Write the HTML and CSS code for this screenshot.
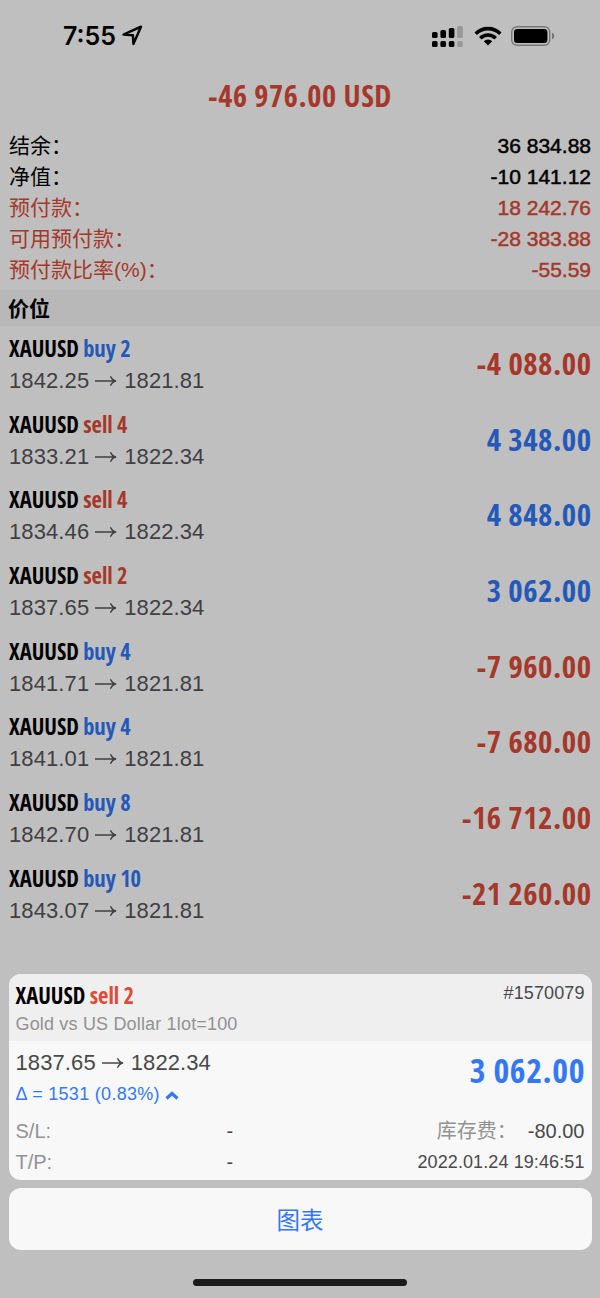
FILE: index.html
```
<!DOCTYPE html>
<html lang="zh-CN">
<head>
    <meta charset="UTF-8">
    <meta name="viewport" content="width=device-width, initial-scale=1.0">
    <title>交易</title>
    <link rel="stylesheet" href="styles.css">
</head>
<body>

<!-- shared arrow -->
<svg class="defs" width="0" height="0">
    <symbol id="arrow" viewBox="0 0 22 14">
        <path d="M0 7h21M15.500 2.200c1 2.600 2.800 4.200 5.500 4.800c-2.700.6-4.500 2.200-5.500 4.800" fill="none" stroke="currentColor" stroke-width="1.4"/>
    </symbol>
</svg>

<div class="screen">
    <div class="status-bar">
        <div class="clock">
            <span>7:55</span>
            <svg width="21" height="21" viewBox="0 0 21 21">
                <path d="M1.500 9.600L19 1.700L11.400 19L10.900 10.200Z" fill="none" stroke="#000" stroke-width="2.400" stroke-linejoin="round"/>
            </svg>
        </div>
        <div class="status-icons">
            <svg width="32" height="22" viewBox="0 0 32 22">
                <rect x="0" y="7" width="5.600" height="6" rx="1.600"/>
                <rect x="8.400" y="5" width="5.600" height="8" rx="1.600"/>
                <rect x="16.800" y="3" width="5.600" height="10" rx="1.600"/>
                <rect x="25.200" y="1" width="5.600" height="12" rx="1.600" fill="#999"/>
                <rect x="0" y="16" width="5.600" height="6" rx="1.600"/>
                <rect x="8.400" y="16" width="5.600" height="6" rx="1.600"/>
                <rect x="16.800" y="16" width="5.600" height="6" rx="1.600"/>
                <rect x="25.200" y="16" width="5.600" height="6" rx="1.600" fill="#999"/>
            </svg>
            <svg width="28" height="20" viewBox="0 0 28 20">
                <path d="M1.700 7.700a17.400 17.400 0 0 1 24.600 0M6.300 12.200a10.900 10.900 0 0 1 15.400 0" fill="none" stroke="#000" stroke-width="3.600"/>
                <path d="M14 19.500l-4.200-4.200a6 6 0 0 1 8.400 0z"/>
            </svg>
            <svg width="44" height="20" viewBox="0 0 44 20">
                <rect x=".7" y=".7" width="38" height="18.600" rx="5.400" fill="none" stroke="#777" stroke-width="1.400"/>
                <rect x="3" y="3" width="33.400" height="14" rx="3.300"/>
                <path d="M41 6.800c3.200 1 3.200 5.400 0 6.400z" fill="#777"/>
            </svg>
        </div>
    </div>

    <h1 class="profit">-46 976.00 USD</h1>

    <div class="summary">
        <div class="summary-row"><span>结余：</span><b>36 834.88</b></div>
        <div class="summary-row"><span>净值：</span><b>-10 141.12</b></div>
        <div class="summary-row red"><span>预付款：</span><b>18 242.76</b></div>
        <div class="summary-row red"><span>可用预付款：</span><b>-28 383.88</b></div>
        <div class="summary-row red"><span>预付款比率(%)：</span><b>-55.59</b></div>
    </div>

    <h2 class="section-title">价位</h2>

    <div class="positions">
        <div class="position">
            <div>
                <div class="symbol">XAUUSD <span class="blue">buy 2</span></div>
                <div class="prices">1842.25<svg class="arrow"><use href="#arrow"/></svg>1821.81</div>
            </div>
            <div class="amount red">-4 088.00</div>
        </div>
        <div class="position">
            <div>
                <div class="symbol">XAUUSD <span class="red">sell 4</span></div>
                <div class="prices">1833.21<svg class="arrow"><use href="#arrow"/></svg>1822.34</div>
            </div>
            <div class="amount blue">4 348.00</div>
        </div>
        <div class="position">
            <div>
                <div class="symbol">XAUUSD <span class="red">sell 4</span></div>
                <div class="prices">1834.46<svg class="arrow"><use href="#arrow"/></svg>1822.34</div>
            </div>
            <div class="amount blue">4 848.00</div>
        </div>
        <div class="position">
            <div>
                <div class="symbol">XAUUSD <span class="red">sell 2</span></div>
                <div class="prices">1837.65<svg class="arrow"><use href="#arrow"/></svg>1822.34</div>
            </div>
            <div class="amount blue">3 062.00</div>
        </div>
        <div class="position">
            <div>
                <div class="symbol">XAUUSD <span class="blue">buy 4</span></div>
                <div class="prices">1841.71<svg class="arrow"><use href="#arrow"/></svg>1821.81</div>
            </div>
            <div class="amount red">-7 960.00</div>
        </div>
        <div class="position">
            <div>
                <div class="symbol">XAUUSD <span class="blue">buy 4</span></div>
                <div class="prices">1841.01<svg class="arrow"><use href="#arrow"/></svg>1821.81</div>
            </div>
            <div class="amount red">-7 680.00</div>
        </div>
        <div class="position">
            <div>
                <div class="symbol">XAUUSD <span class="blue">buy 8</span></div>
                <div class="prices">1842.70<svg class="arrow"><use href="#arrow"/></svg>1821.81</div>
            </div>
            <div class="amount red">-16 712.00</div>
        </div>
        <div class="position">
            <div>
                <div class="symbol">XAUUSD <span class="blue">buy 10</span></div>
                <div class="prices">1843.07<svg class="arrow"><use href="#arrow"/></svg>1821.81</div>
            </div>
            <div class="amount red">-21 260.00</div>
        </div>
    </div>

    <!-- bottom sheet -->
    <div class="sheet">
        <div class="card">
            <div class="card-head">
                <div>
                    <div class="symbol">XAUUSD <span class="red">sell 2</span></div>
                    <div class="description">Gold vs US Dollar 1lot=100</div>
                </div>
                <div class="ticket">#1570079</div>
            </div>
            <div class="card-main">
                <div>
                    <div class="prices">1837.65<svg class="arrow"><use href="#arrow"/></svg>1822.34</div>
                    <div class="delta">Δ = 1531 (0.83%)<svg width="14" height="10" viewBox="0 0 14 10"><path d="M1.500 8.500L7 3.500L12.500 8.500" fill="none" stroke="currentColor" stroke-width="3.200"/></svg></div>
                </div>
                <div class="amount blue">3 062.00</div>
            </div>
            <div class="details">
                <span class="label">S/L:</span><span>-</span>
                <span class="fee"><span class="label">库存费：</span>-80.00</span>
                <span class="label">T/P:</span><span>-</span>
                <span class="date">2022.01.24 19:46:51</span>
            </div>
        </div>
        <button class="chart-button">图表</button>
    </div>

    <div class="home-indicator"></div>
</div>

</body>
</html>
```
FILE: styles.css
```
* {
    box-sizing: border-box;
}

body {
    margin: 0;
    background-color: #bfbfbf;
    color: #000;
    font-family: "Liberation Sans", "Noto Sans CJK SC", sans-serif;
}

.defs {
    display: block;
}

.screen {
    display: flex;
    flex-direction: column;
    width: 600px;
    height: 1298px;
    overflow: hidden;
}

.red {
    color: #a5382a;
}

.blue {
    color: #2559b9;
}

/* status bar */
.status-bar {
    display: flex;
    justify-content: space-between;
    align-items: center;
    height: 71px;
    padding: 0 45px 0 63px;
}

.clock {
    display: flex;
    align-items: center;
    gap: 6px;
    font-family: Inter, sans-serif;
    font-size: 25px;
    font-weight: 600;
}

.status-icons {
    display: flex;
    align-items: center;
    gap: 9.5px;
}

.profit {
    margin: 0;
    height: 59px;
    line-height: 49px;
    text-align: center;
    font-family: "Open Sans Condensed", "Open Sans", sans-serif;
    font-size: 30.5px;
    font-weight: 600;
    letter-spacing: 0.6px;
    word-spacing: -1.5px;
    color: #a5382a;
}

/* account summary */
.summary {
    height: 160px;
    padding: 0 9px;
}

.summary-row {
    display: flex;
    justify-content: space-between;
    height: 31px;
    line-height: 31px;
    font-size: 21px;
}

.summary-row b {
    font-weight: 400;
    -webkit-text-stroke: 0.5px currentColor;
}

.section-title {
    margin: 0;
    height: 36px;
    padding-left: 8px;
    line-height: 37px;
    font-size: 21px;
    background-color: #b8b8b8;
}

/* open positions */
.position {
    display: flex;
    justify-content: space-between;
    align-items: center;
    height: 75.7px;
    padding: 2px 9px 0;
}

.symbol {
    line-height: 32px;
    font-family: "Open Sans Condensed", "Open Sans", sans-serif;
    font-size: 22.5px;
    font-weight: 600;
    word-spacing: -1.2px;
}

.prices {
    display: flex;
    align-items: center;
    line-height: 32px;
    font-size: 22px;
    letter-spacing: 0.1px;
    color: #404043;
}

.arrow {
    width: 22px;
    height: 14px;
    margin: 0 7px 0 6px;
}

.amount {
    padding-bottom: 4px;
    font-family: "Open Sans Condensed", "Open Sans", sans-serif;
    font-size: 31px;
    font-weight: 600;
    letter-spacing: 0.5px;
    word-spacing: -1.5px;
    margin-right: -0.5px;
}

/* bottom sheet */
.sheet {
    margin: auto 8.5px 0;
}

.card {
    height: 206px;
    border-radius: 12px;
    overflow: hidden;
    background-color: #f8f8f8;
}

.card .red {
    color: #df4b38;
}

.card .blue {
    color: #3478f6;
}

.card .prices {
    color: #48484b;
}

.card-head {
    display: flex;
    justify-content: space-between;
    height: 67px;
    padding: 6px 7px 0;
    background-color: #efefef;
}

.description {
    line-height: 24px;
    font-size: 18px;
    letter-spacing: 0.17px;
    color: #929294;
}

.ticket {
    line-height: 26px;
    font-size: 18px;
    letter-spacing: 0.1px;
    color: #48484b;
}

.card-main {
    display: flex;
    justify-content: space-between;
    height: 75px;
    padding: 6px 7px 0;
}

.card-main .amount {
    line-height: 47px;
    font-size: 34px;
    letter-spacing: 0.6px;
}

.delta {
    display: flex;
    align-items: center;
    gap: 5px;
    line-height: 31px;
    font-size: 18px;
    letter-spacing: 0.3px;
    color: #3478f6;
}

.details {
    display: grid;
    grid-template-columns: 211px 100px 1fr;
    padding: 0 7px;
    line-height: 31px;
    font-size: 20px;
    color: #48484b;
}

.label {
    color: #929294;
}

.fee,
.date {
    text-align: right;
}

.fee .label {
    margin-right: 11px;
}

.date {
    font-size: 18px;
    letter-spacing: 0.1px;
}

.chart-button {
    display: block;
    width: 100%;
    height: 62px;
    margin-top: 8px;
    border: none;
    border-radius: 12px;
    background-color: #f8f8f8;
    color: #3478f6;
    font-family: "Noto Sans CJK SC", sans-serif;
    font-size: 23.5px;
}

.home-indicator {
    width: 214px;
    height: 7px;
    margin: 29px auto 12px;
    border-radius: 4px;
    background-color: #1c1c1c;
}
```
